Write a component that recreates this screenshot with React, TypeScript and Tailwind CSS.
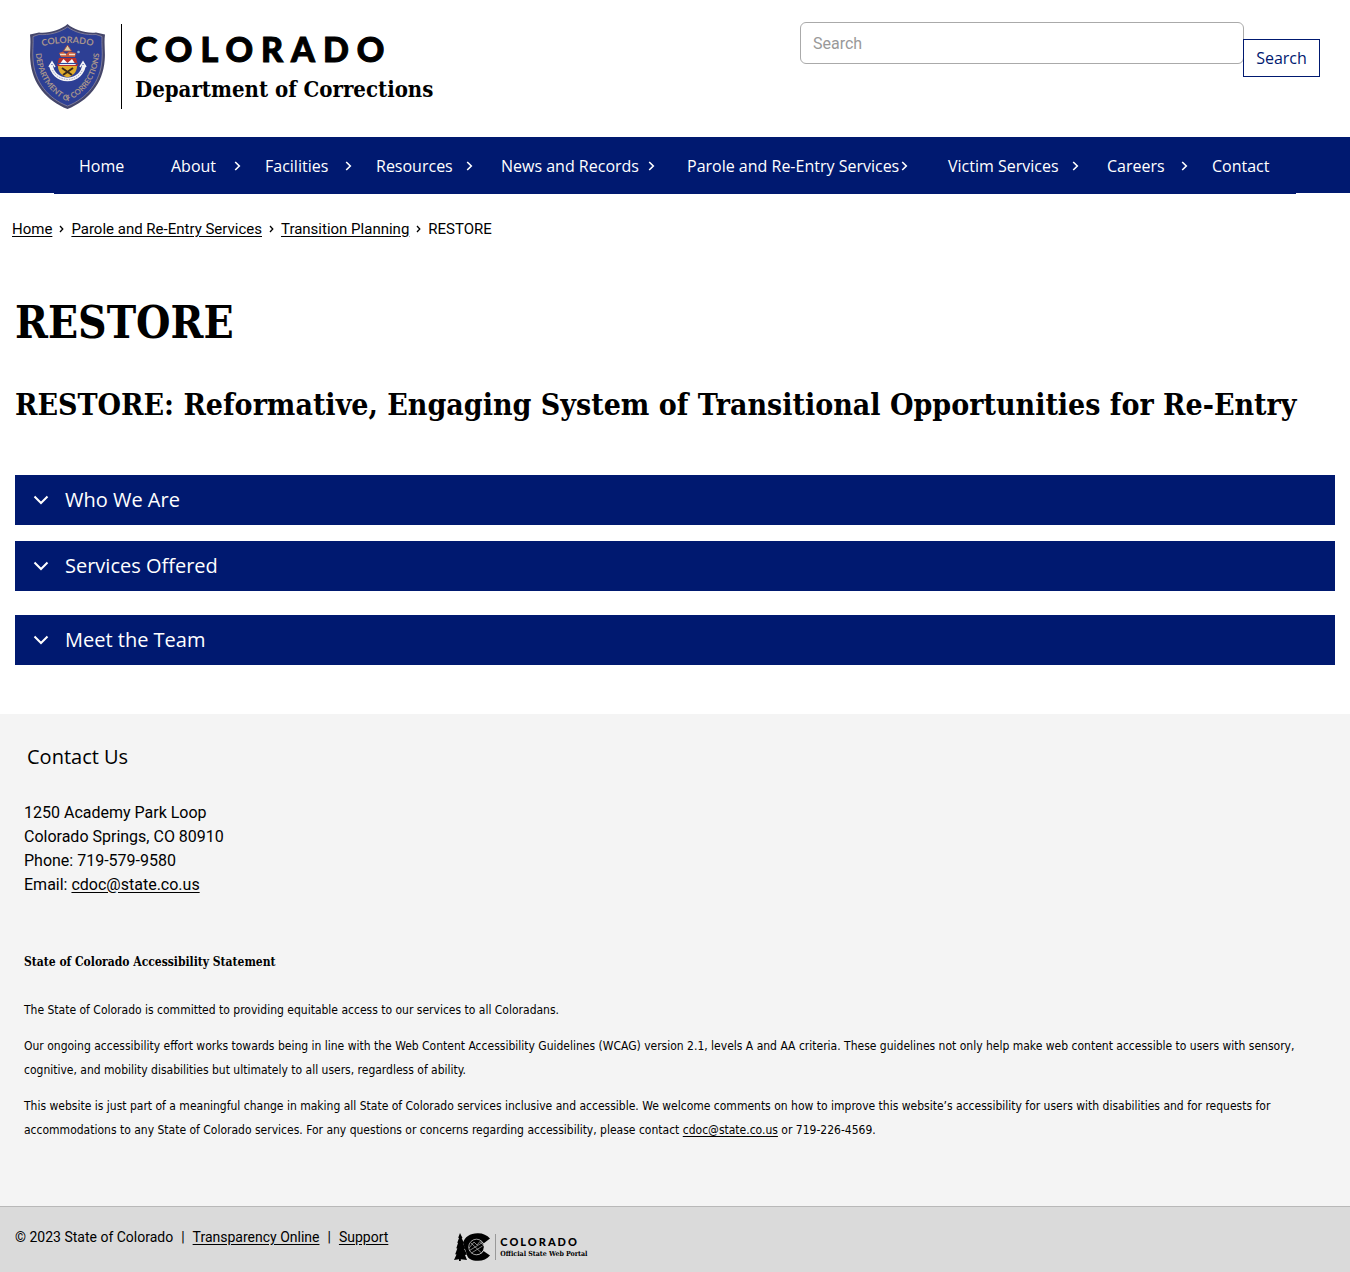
import { useState } from "react";

const nav = [
  { label: "Home", menu: false, cell: "" },
  { label: "About", menu: true, cell: "pr-6" },
  { label: "Facilities", menu: true, cell: "pr-6" },
  { label: "Resources", menu: true, cell: "pr-7" },
  { label: "News and Records", menu: true, cell: "pr-8" },
  { label: "Parole and Re-Entry Services", menu: true, cell: "pr-10" },
  { label: "Victim Services", menu: true, cell: "pr-7" },
  { label: "Careers", menu: true, cell: "pr-6" },
  { label: "Contact", menu: false, cell: "" },
];

const sections = [
  { title: "Who We Are", gap: "" },
  { title: "Services Offered", gap: "mt-4" },
  { title: "Meet the Team", gap: "mt-6" },
];

const slab = "font-['DejaVu_Serif_Condensed','DejaVu_Serif',serif] font-bold";

function Shield() {
  return (
    <svg viewBox="0 0 75 85" className="h-[85px] w-[75px] shrink-0" role="img" aria-label="Colorado Department of Corrections badge">
      <defs>
        <path id="arc-top" d="M11 22.500 Q37.500 15.500 64 22.500" />
        <path id="arc-bottom" d="M5.500 22 C5.500 48 16 67.500 37.500 77.500 C59 67.500 69.500 48 69.500 22" />
      </defs>
      <path d="M37.500 0 C31 6 19 9.500 9 8.500 L0 10.500 C1.200 20 -0.500 27 0.300 36 C2 60 17 77 37.500 85 C58 77 73 60 74.700 36 C75.500 27 73.800 20 75 10.500 L66 8.500 C56 9.500 44 6 37.500 0Z" fill="#45466a" />
      <path d="M37.500 3 C30 8.500 19 11.300 9 10.500 L3 12.500 C3.500 21 2.200 28 3 36 C4.700 58 18 74.500 37.500 82 C57 74.500 70.300 58 72 36 C72.800 28 71.500 21 72 12.500 L66 10.500 C56 11.300 45 8.500 37.500 3Z" fill="#2d3f94" stroke="#8b86a0" strokeWidth="0.8" />
      <g fill="#a8958c" fontFamily="Lato, sans-serif" fontWeight="700">
        <text fontSize="9"><textPath href="#arc-top" startOffset="50%" textAnchor="middle">COLORADO</textPath></text>
        <text fontSize="7.800"><textPath href="#arc-bottom" startOffset="50%" textAnchor="middle">DEPARTMENT OF CORRECTIONS</textPath></text>
      </g>
      <path d="M37.500 21 L41.500 27 H33.500Z" fill="#d9cfa8" stroke="#b04530" strokeWidth="0.8" />
      <path d="M29 29 L33 27.500 L36 30 L39 27.500 L46 29 L45 33 H31Z" fill="#c85b3c" />
      <path d="M30 30.500 H36 M39 30.500 H45" stroke="#f1e4c9" strokeWidth="1.300" />
      <circle cx="48.500" cy="28" r="1.300" fill="#8fb5d8" />
      <path d="M29 34 H46 L48 42 H27Z" fill="#b52f2d" />
      <path d="M29 41 L33.500 35 L37.500 39 L42 35 L46 41Z" fill="#fff" />
      <path d="M28 39.500 H47" stroke="#294a9b" strokeWidth="1.200" />
      <path d="M28 42 H47 C47 48 43 52 37.500 53.500 C32 52 28 48 28 42Z" fill="#e0ac2b" />
      <path d="M32 44 L42 51 M43 44 L33 51" stroke="#3a2a18" strokeWidth="2" />
      <path d="M21 41 C22 49 28 55 37.500 55.500 C47 55 53 49 54 41" fill="none" stroke="#f4f4f7" strokeWidth="3.600" />
      <path d="M19 43 L22 38 L25 43 M50 43 L53 38 L56 43" fill="none" stroke="#f4f4f7" strokeWidth="1.500" />
      <path d="M22.500 46 C25 51.500 30 55 37.500 55.500 C45 55 50 51.500 52.500 46" fill="none" stroke="#8d92b5" strokeWidth="0.800" strokeDasharray="1.500 1" />
    </svg>
  );
}

function StateLogo() {
  return (
    <svg viewBox="0 0 37 28" className="h-7 w-[37px] shrink-0" aria-hidden="true">
      <path d="M6 0 L8.500 5 L7.700 5.200 L10 10 L8.900 10.300 L11.500 15.500 L10.200 16 L13 21.500 L11 22 L13 27 L6.800 26.300 V28 H5 V26.300 L0 27 L2.500 21.500 L1.200 21.200 L3.300 15.500 L2.300 15.200 L4 10 L3.300 9.800 L5 5 L4.200 4.800Z" />
      <path d="M23.500 0.200 C28.500 0 33 2 36 5.500 L29.500 10.500 C28 8 26 7 23.500 7 C18.800 7 16 9.800 16 14 C16 18.200 19 21.400 23.500 21.400 C26 21.400 28 20.400 29.500 18 L36 22.500 C33 26 28.500 28 23.500 27.800 C18 27.800 13.800 26 12.800 21.500 L9 10 C10.500 4 16 0.200 23.500 0.200Z" />
      <circle cx="22.500" cy="14" r="7.500" />
      <path d="M15 15 L20 9 L23 12 L26 8.500 L31 14 M15.500 17.500 L28.500 9.500 M17 10 L27.500 20 M17.500 20 L28.500 13" fill="none" stroke="#dadada" strokeWidth="0.600" />
      <circle cx="22.500" cy="14" r="7.800" fill="none" stroke="#dadada" strokeWidth="0.700" />
    </svg>
  );
}

function Chevron() {
  return (
    <svg viewBox="0 0 7 10" className="h-[10px] w-[7px] shrink-0" aria-hidden="true">
      <path d="M1.200 1 L5.300 5 L1.200 9" fill="none" stroke="currentColor" strokeWidth="1.600" />
    </svg>
  );
}

function Separator() {
  return (
    <svg viewBox="0 0 5 8" className="h-2 w-[5px] shrink-0" aria-hidden="true">
      <path d="M1 1 L3.800 4 L1 7" fill="none" stroke="currentColor" strokeWidth="1.300" />
    </svg>
  );
}

function Section({ title, gap }: { title: string; gap: string }) {
  const [open, setOpen] = useState(false);
  return (
    <div className={gap}>
      <button
        type="button"
        aria-expanded={open}
        onClick={() => setOpen(!open)}
        className="flex h-[50px] w-full items-center gap-4 bg-[#001970] pl-[18px] text-left text-xl text-white"
      >
        <svg viewBox="0 0 16 10" className="h-[10px] w-4" aria-hidden="true">
          <path d="M1.500 1.500 L8 8 L14.500 1.500" fill="none" stroke="currentColor" strokeWidth="2" />
        </svg>
        {title}
      </button>
    </div>
  );
}

export default function App() {
  return (
    <div className="bg-white font-['Open_Sans',sans-serif] text-base text-black">
      <header className="flex min-h-[137px] items-start justify-between px-[30px]">
        <a href="#" className="flex items-center pt-6">
          <Shield />
          <div className="ml-4 flex h-[85px] flex-col border-l border-black pl-[13px]">
            <span className="mt-2 font-['Lato',sans-serif] text-[34px] leading-[34px] font-black tracking-[8px] [-webkit-text-stroke:1px_black]">COLORADO</span>
            <span className={`${slab} mt-2 text-[22px] leading-[30px]`}>Department of Corrections</span>
          </div>
        </a>
        <form className="flex w-[520px] pt-[22px]" onSubmit={(e) => e.preventDefault()}>
          <input
            type="search"
            aria-label="Search"
            placeholder="Search"
            className="h-[42px] min-w-0 flex-1 rounded-md border border-[#aaa] px-3 font-['Roboto',sans-serif] placeholder:text-[#999]"
          />
          <button type="submit" className="-ml-px mt-[17px] h-[38px] w-[77px] border border-[#001970] bg-white font-medium text-[#001970]">
            Search
          </button>
        </form>
      </header>

      <nav className="h-14 bg-[#001970] px-[54px]">
        <ul className="grid h-[57px] grid-cols-[92fr_94fr_111fr_125fr_186fr_261fr_159fr_105fr_84fr] bg-[#001970] pl-[25px] text-white">
          {nav.map((item) => (
            <li key={item.label} className={`${item.cell} min-w-0`}>
              <a href="#" className="flex h-full items-center justify-between whitespace-nowrap">
                <span className="min-w-0">{item.label}</span>
                {item.menu && <Chevron />}
              </a>
            </li>
          ))}
        </ul>
      </nav>

      <nav aria-label="Breadcrumb" className="px-3 pt-6 font-['Roboto',sans-serif] text-[15px] leading-6">
        <ol className="flex items-center gap-[7px]">
          <li><a href="#" className="underline underline-offset-2">Home</a></li>
          <li><Separator /></li>
          <li><a href="#" className="underline underline-offset-2">Parole and Re-Entry Services</a></li>
          <li><Separator /></li>
          <li><a href="#" className="underline underline-offset-2">Transition Planning</a></li>
          <li><Separator /></li>
          <li>RESTORE</li>
        </ol>
      </nav>

      <main className="px-[15px] pb-[49px]">
        <h1 className={`${slab} pt-14 text-[44px] leading-[52px]`}>RESTORE</h1>
        <h2 className={`${slab} pt-9 text-[30px] leading-10`}>
          RESTORE: Reformative, Engaging System of Transitional Opportunities for Re-Entry
        </h2>
        <div className="pt-[50px]">
          {sections.map((s) => (
            <Section key={s.title} {...s} />
          ))}
        </div>
      </main>

      <footer>
        <div className="bg-[#f4f4f4] px-6 pt-[27px] pb-16">
          <h2 className="pl-[3px] text-xl leading-8">Contact Us</h2>
          <address className="pt-7 font-['Roboto',sans-serif] leading-6 not-italic">
            1250 Academy Park Loop<br />
            Colorado Springs, CO 80910<br />
            Phone: 719-579-9580<br />
            Email: <a href="mailto:cdoc@state.co.us" className="underline underline-offset-2">cdoc@state.co.us</a>
          </address>
          <h3 className={`${slab} pt-[53px] text-xs leading-6`}>State of Colorado Accessibility Statement</h3>
          <div className="space-y-3 pt-6 font-['DejaVu_Sans_Condensed',sans-serif] text-xs leading-6">
            <p>The State of Colorado is committed to providing equitable access to our services to all Coloradans.</p>
            <p>
              Our ongoing accessibility effort works towards being in line with the Web Content Accessibility Guidelines (WCAG) version 2.1, levels A and AA criteria. These guidelines not only help make web content accessible to users with sensory, cognitive, and mobility disabilities but ultimately to all users, regardless of ability.
            </p>
            <p>
              This website is just part of a meaningful change in making all State of Colorado services inclusive and accessible. We welcome comments on how to improve this website’s accessibility for users with disabilities and for requests for accommodations to any State of Colorado services. For any questions or concerns regarding accessibility, please contact <a href="mailto:cdoc@state.co.us" className="underline underline-offset-2">cdoc@state.co.us</a> or 719-226-4569.
            </p>
          </div>
        </div>
        <div className="flex h-[66px] items-start border-t border-[#b8b8b8] bg-[#dadada] px-[15px]">
          <p className="flex gap-2 pt-5 font-['Roboto',sans-serif] text-sm leading-5">
            <span>© 2023 State of Colorado</span>
            <span>|</span>
            <a href="#" className="underline underline-offset-2">Transparency Online</a>
            <span>|</span>
            <a href="#" className="underline underline-offset-2">Support</a>
          </p>
          <a href="#" className="ml-[66px] flex items-center pt-[26px]">
            <StateLogo />
            <span className="ml-1 flex h-[26px] flex-col border-l border-[#999] pl-1">
              <span className="mt-[2px] font-['Lato',sans-serif] text-[11px] leading-[11px] font-black tracking-[2px]">COLORADO</span>
              <span className={`${slab} mt-[2px] text-[7px] leading-[10px]`}>Official State Web Portal</span>
            </span>
          </a>
        </div>
      </footer>
    </div>
  );
}
